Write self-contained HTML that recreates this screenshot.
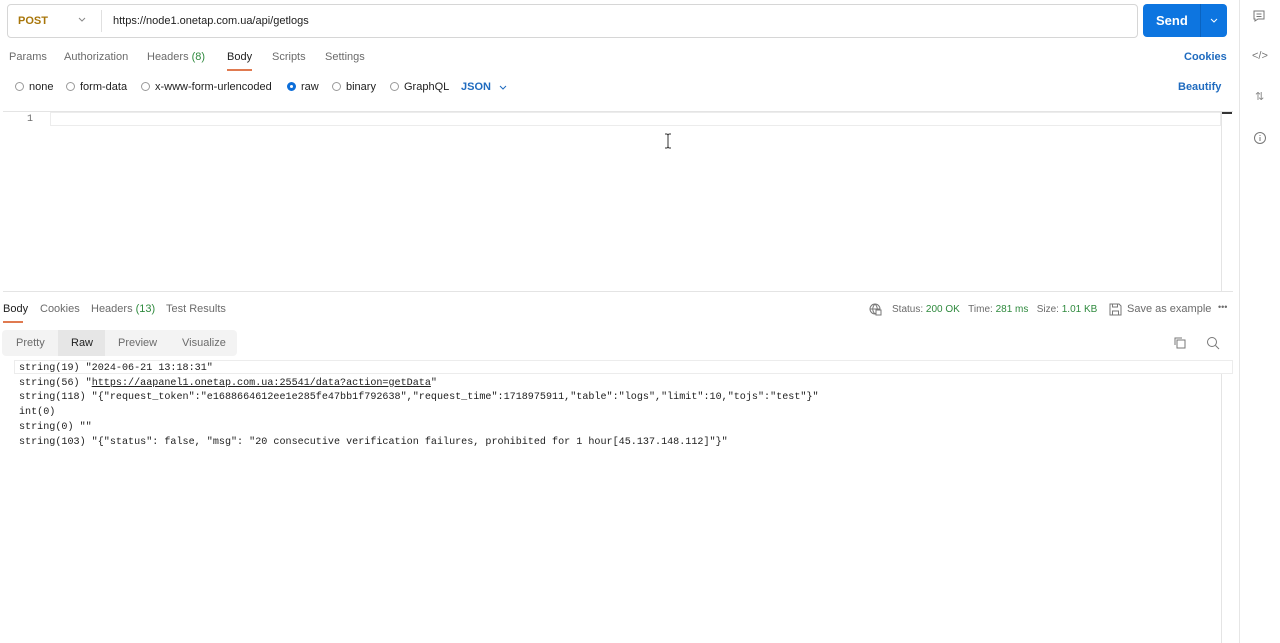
<!DOCTYPE html>
<html><head><meta charset="utf-8"><style>
*{box-sizing:border-box;margin:0;padding:0}
body{width:1280px;height:643px;background:#fff;font-family:"Liberation Sans",sans-serif;font-size:11px;color:#212121;position:relative;overflow:hidden}
.a{position:absolute}
.g{color:#6b6b6b}
.mono{font-family:"Liberation Mono",monospace;font-size:10.1px;color:#212121}
.rad{display:inline-block;width:9px;height:9px;border:1px solid #9a9a9a;border-radius:50%;vertical-align:-1px;margin-right:5px}
</style></head><body>
<div class="a" style="left:7px;top:4px;width:1131px;height:34px;border:1px solid #d6d6d6;border-radius:4px"></div>
<div class="a" style="left:18px;top:15px;font-weight:bold;color:#a8760a;font-size:11px">POST</div>
<svg class="a" style="left:78px;top:17px" width="8" height="6" fill="none" stroke="#888"><path d="M1 1l3 3 3-3"/></svg>
<div class="a" style="left:101px;top:10px;width:1px;height:22px;background:#e0e0e0"></div>
<div class="a" style="left:113px;top:15px;font-size:11px">https://node1.onetap.com.ua/api/getlogs</div>
<div class="a" style="left:1143px;top:4px;width:84px;height:33px;background:#0d75e0;border-radius:4px"></div>
<div class="a" style="left:1200px;top:4px;width:1px;height:33px;background:#0a63c0"></div>
<div class="a" style="left:1156px;top:13px;color:#fff;font-weight:bold;font-size:13px">Send</div>
<svg class="a" style="left:1210px;top:18px" width="8" height="6" fill="none" stroke="#fff"><path d="M1 1l3 3 3-3"/></svg>
<div class="a" style="left:1239px;top:0;width:1px;height:643px;background:#e6e6e6"></div>
<svg class="a" style="left:1252px;top:9px" width="14" height="14" viewBox="0 0 14 14" fill="none" stroke="#777" stroke-width="1"><path d="M2 2h10v8H6l-3 2v-2H2z M4.5 5h5M4.5 7.5h5"/></svg>
<div class="a" style="left:1252px;top:50px;color:#777;font-size:11px">&lt;/&gt;</div>
<div class="a" style="left:1255px;top:90px;color:#888;font-size:11px">&#8645;</div>
<svg class="a" style="left:1253px;top:131px" width="14" height="14" viewBox="0 0 14 14" fill="none" stroke="#777"><circle cx="7" cy="7" r="5.5"/><path d="M7 6v4M7 4v1"/></svg>
<div class="a g" style="left:9px;top:51px">Params</div>
<div class="a g" style="left:64px;top:51px">Authorization</div>
<div class="a g" style="left:147px;top:51px">Headers <span style="color:#2f8a3e">(8)</span></div>
<div class="a" style="left:227px;top:51px">Body</div>
<div class="a" style="left:227px;top:69px;width:25px;height:2px;background:#e07a50"></div>
<div class="a g" style="left:272px;top:51px">Scripts</div>
<div class="a g" style="left:325px;top:51px">Settings</div>
<div class="a" style="left:1184px;top:51px;color:#1f6bbf;font-weight:bold">Cookies</div>
<div class="a" style="left:15px;top:81px"><span class="rad"></span>none</div>
<div class="a" style="left:66px;top:81px"><span class="rad"></span>form-data</div>
<div class="a" style="left:141px;top:81px"><span class="rad"></span>x-www-form-urlencoded</div>
<div class="a" style="left:287px;top:81px"><span class="rad" style="border:3px solid #0d6ed9"></span>raw</div>
<div class="a" style="left:332px;top:81px"><span class="rad"></span>binary</div>
<div class="a" style="left:390px;top:81px"><span class="rad"></span>GraphQL</div>
<div class="a" style="left:461px;top:81px;color:#1f6bbf;font-weight:bold">JSON</div>
<svg class="a" style="left:499px;top:85px" width="8" height="6" fill="none" stroke="#1f6bbf"><path d="M1 1l3 3 3-3"/></svg>
<div class="a" style="left:1178px;top:81px;color:#1f6bbf;font-weight:bold">Beautify</div>
<div class="a" style="left:3px;top:111px;width:1230px;height:181px;border-top:1px solid #e4e4e4;border-bottom:1px solid #e4e4e4"></div>
<div class="a" style="left:50px;top:112px;width:1171px;height:14px;border:1px solid #ececec"></div>
<div class="a" style="left:1221px;top:112px;width:1px;height:180px;background:#e4e4e4"></div>
<div class="a" style="left:1222px;top:112px;width:10px;height:2px;background:#333"></div>
<div class="a g" style="left:27px;top:114px;font-size:10px;font-family:'Liberation Mono',monospace">1</div>
<svg class="a" style="left:664px;top:133px" width="8" height="16" fill="none" stroke="#333"><path d="M1 1h2l1 1 1-1h2M4 2v12M1 15h2l1-1 1 1h2"/></svg>
<div class="a" style="left:3px;top:303px">Body</div>
<div class="a" style="left:3px;top:321px;width:20px;height:2px;background:#e07a50"></div>
<div class="a g" style="left:40px;top:303px">Cookies</div>
<div class="a g" style="left:91px;top:303px">Headers <span style="color:#2f8a3e">(13)</span></div>
<div class="a g" style="left:166px;top:303px">Test Results</div>
<svg class="a" style="left:869px;top:303px" width="13" height="13" fill="none" stroke="#777"><circle cx="6" cy="6" r="5"/><path d="M1 6h10M6 1c-3 3-3 7 0 10M6 1c3 3 3 7 0 10"/><rect x="7" y="7" width="5" height="5" fill="#fff"/></svg>
<div class="a g" style="left:892px;top:304px;font-size:10px">Status: <span style="color:#2f8a3e">200 OK</span>&nbsp;&nbsp;&nbsp;Time: <span style="color:#2f8a3e">281 ms</span>&nbsp;&nbsp;&nbsp;Size: <span style="color:#2f8a3e">1.01 KB</span></div>
<svg class="a" style="left:1109px;top:303px" width="13" height="13" fill="none" stroke="#777"><path d="M1 1h9l2 2v9H1z M3.5 1v3h5V1M3.5 12V8h6v4"/></svg>
<div class="a g" style="left:1127px;top:303px;font-size:11px">Save as example</div>
<div class="a g" style="left:1218px;top:302px;font-size:9px">&#8226;&#8226;&#8226;</div>
<div class="a" style="left:2px;top:330px;width:235px;height:26px;background:#f3f3f3;border-radius:4px"></div>
<div class="a" style="left:58px;top:330px;width:47px;height:26px;background:#e6e6e6"></div>
<div class="a g" style="left:16px;top:337px">Pretty</div>
<div class="a" style="left:71px;top:337px">Raw</div>
<div class="a g" style="left:118px;top:337px">Preview</div>
<div class="a g" style="left:182px;top:337px">Visualize</div>
<svg class="a" style="left:1173px;top:336px" width="13" height="13" fill="none" stroke="#777"><rect x="4" y="4" width="8" height="8"/><path d="M2 9V2h7"/></svg>
<svg class="a" style="left:1206px;top:336px" width="14" height="14" fill="none" stroke="#777"><circle cx="6" cy="6" r="4.5"/><path d="M9.5 9.5L13 13"/></svg>
<div class="a" style="left:14px;top:360px;width:1219px;height:14px;border:1px solid #ececec"></div>
<div class="a" style="left:1221px;top:374px;width:1px;height:269px;background:#e4e4e4"></div>
<div class="a mono" style="left:19px;top:362px;line-height:14.7px;white-space:pre">string(19) "2024-06-21 13:18:31"
string(56) "<u>https://aapanel1.onetap.com.ua:25541/data?action=getData</u>"
string(118) "{"request_token":"e1688664612ee1e285fe47bb1f792638","request_time":1718975911,"table":"logs","limit":10,"tojs":"test"}"
int(0)
string(0) ""
string(103) "{"status": false, "msg": "20 consecutive verification failures, prohibited for 1 hour[45.137.148.112]"}"</div>
</body></html>
